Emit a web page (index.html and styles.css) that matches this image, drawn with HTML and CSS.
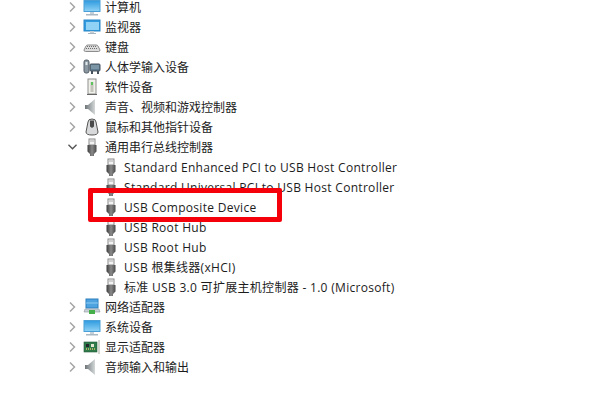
FILE: index.html
```html
<!DOCTYPE html>
<html lang="zh-CN">
<head>
  <meta charset="UTF-8" />
  <title>设备管理器</title>
  <link rel="stylesheet" href="styles.css">
</head>
<body>
  <svg class="defs" width="0" height="0">
    <defs>
      <linearGradient id="screen" x1="0" y1="0" x2="0" y2="1">
        <stop offset="0" stop-color="#2f9be0"/>
        <stop offset="1" stop-color="#8fd2f5"/>
      </linearGradient>
      <linearGradient id="plug" x1="0" y1="0" x2="1" y2="0">
        <stop offset="0" stop-color="#3c3c3c"/>
        <stop offset="0.5" stop-color="#8a8a8a"/>
        <stop offset="1" stop-color="#4a4a4a"/>
      </linearGradient>
      <linearGradient id="cone" x1="0" y1="0" x2="1" y2="0">
        <stop offset="0" stop-color="#6f7679"/>
        <stop offset="1" stop-color="#d4d8d9"/>
      </linearGradient>
      <symbol id="chev-r" viewBox="0 0 8 12"><path d="M1.500 1.500 6 6l-4.500 4.500" fill="none" stroke="#a6a6a6" stroke-width="1.500"/></symbol>
      <symbol id="chev-d" viewBox="1 1 10 6"><path d="M1.500 1.500 6 6l4.500-4.500" fill="none" stroke="#555" stroke-width="1.500"/></symbol>
      <symbol id="i-pc" viewBox="0 -2 18 18"><rect x="1" y="0.500" width="16" height="11" fill="url(#screen)" stroke="#4a9fd6"/><path d="M7 12h4v2H7z" fill="#c5d0d8"/><path d="M3 14h12v1.500H3z" fill="#a9b8c2"/></symbol>
      <symbol id="i-mon" viewBox="0 -1 18 18"><rect x="1" y="1" width="16" height="11" fill="#2f9be0" stroke="#2a86c6"/><rect x="3" y="3" width="13" height="8" fill="#8fd2f5"/><path d="M7 12h4v2H7z" fill="#c5d0d8"/><path d="M5 14h8v1H5z" fill="#a7b4bd"/></symbol>
      <symbol id="i-kbd" viewBox="0 0 18 18"><path d="M1 12l2-4q.500-1 2-1h8q1.500 0 2 1l2 4q0 1.500-1.500 1.500h-13Q1 13.500 1 12z" fill="#dcdcdc" stroke="#8c8c8c"/><path d="M4 8.500h10M3 10.500h12" stroke="#6f6f6f" stroke-dasharray="1 1"/></symbol>
      <symbol id="i-hid" viewBox="0 0 18 18"><rect x="1" y="2" width="5" height="13" rx="2" fill="#8b98a1" stroke="#55606a"/><rect x="2.500" y="4" width="2" height="3" fill="#e4e8ea"/><rect x="7" y="6" width="10" height="7" rx="1" fill="#5f7d8f" stroke="#46535c"/><path d="M8.500 8h7M8.500 10h7" stroke="#cfe0ea" stroke-dasharray="1 1"/><path d="M9 13v3M15 13v3" stroke="#46535c" stroke-width="2"/></symbol>
      <symbol id="i-soft" viewBox="0 0 18 18"><rect x="5" y="1" width="8" height="15" fill="#f0f0ea" stroke="#8f8f8f"/><rect x="7.500" y="4" width="3" height="10" fill="#c4c4bc"/><rect x="8" y="4" width="2" height="3" fill="#5cc45c"/><path d="M4 16.500h10" stroke="#666"/></symbol>
      <symbol id="i-spk" viewBox="0 0 18 18"><path d="M2 7h3l7-6v16l-7-6H2z" fill="url(#cone)"/></symbol>
      <symbol id="i-mouse" viewBox="0 0 18 18"><path d="M5 4q0-3 4-3t4 3l2 10q0 3-6 3t-6-3z" fill="#d7d9da" stroke="#555"/><path d="M7 2.500h4v6l-2 1.500-2-1.500z" fill="#4a4a4a"/></symbol>
      <symbol id="i-usb" viewBox="0 0 16 18"><rect x="5" y="1" width="6" height="6" fill="#f4f4f4" stroke="#8a8a8a"/><path d="M6.500 3h1M8.500 3h1" stroke="#666"/><path d="M3.500 7h9v6.500l-2.500 2.500v2H6v-2l-2.500-2.500z" fill="url(#plug)"/></symbol>
      <symbol id="i-net" viewBox="0 0 18 18"><rect x="3" y="1" width="12" height="9" fill="#4da3e0" stroke="#2b7fbd"/><path d="M3 5h12" stroke="#8fcbf2"/><path d="M2 11h14l1 3H1z" fill="#c9d2d8" stroke="#8d989f" stroke-width=".6"/><rect x="6" y="12" width="6" height="4" fill="#45b04a"/></symbol>
      <symbol id="i-gpu" viewBox="0 0 18 18"><rect x="1" y="4" width="13" height="10" fill="#2f7a4a" stroke="#1f5a36" stroke-width=".6"/><rect x="3" y="6" width="3" height="3" fill="#22262a"/><rect x="8" y="6" width="3" height="3" fill="#e4e4d0"/><path d="M3 11h9" stroke="#d9c36a" stroke-width="1.500" stroke-dasharray="1 1"/><path d="M16 2v14" stroke="#c7c7c0" stroke-width="1.500"/></symbol>
    </defs>
  </svg>

  <ul class="tree">
    <li class="row"><svg class="chev"><use href="#chev-r"/></svg><svg class="icon"><use href="#i-pc"/></svg><span>计算机</span></li>
    <li class="row"><svg class="chev"><use href="#chev-r"/></svg><svg class="icon"><use href="#i-mon"/></svg><span>监视器</span></li>
    <li class="row"><svg class="chev"><use href="#chev-r"/></svg><svg class="icon"><use href="#i-kbd"/></svg><span>键盘</span></li>
    <li class="row"><svg class="chev"><use href="#chev-r"/></svg><svg class="icon"><use href="#i-hid"/></svg><span>人体学输入设备</span></li>
    <li class="row"><svg class="chev"><use href="#chev-r"/></svg><svg class="icon"><use href="#i-soft"/></svg><span>软件设备</span></li>
    <li class="row"><svg class="chev"><use href="#chev-r"/></svg><svg class="icon"><use href="#i-spk"/></svg><span>声音、视频和游戏控制器</span></li>
    <li class="row"><svg class="chev"><use href="#chev-r"/></svg><svg class="icon"><use href="#i-mouse"/></svg><span>鼠标和其他指针设备</span></li>
    <li class="row"><svg class="chev"><use href="#chev-d"/></svg><svg class="icon"><use href="#i-usb"/></svg><span>通用串行总线控制器</span></li>
    <li class="row child"><svg class="icon"><use href="#i-usb"/></svg><span>Standard Enhanced PCI to USB Host Controller</span></li>
    <li class="row child"><svg class="icon"><use href="#i-usb"/></svg><span>Standard Universal PCI to USB Host Controller</span></li>
    <li class="row child"><svg class="icon"><use href="#i-usb"/></svg><span>USB Composite Device</span></li>
    <li class="row child"><svg class="icon"><use href="#i-usb"/></svg><span>USB Root Hub</span></li>
    <li class="row child"><svg class="icon"><use href="#i-usb"/></svg><span>USB Root Hub</span></li>
    <li class="row child"><svg class="icon"><use href="#i-usb"/></svg><span>USB 根集线器(xHCI)</span></li>
    <li class="row child"><svg class="icon"><use href="#i-usb"/></svg><span>标准 USB 3.0 可扩展主机控制器 - 1.0 (Microsoft)</span></li>
    <li class="row"><svg class="chev"><use href="#chev-r"/></svg><svg class="icon"><use href="#i-net"/></svg><span>网络适配器</span></li>
    <li class="row"><svg class="chev"><use href="#chev-r"/></svg><svg class="icon"><use href="#i-pc"/></svg><span>系统设备</span></li>
    <li class="row"><svg class="chev"><use href="#chev-r"/></svg><svg class="icon"><use href="#i-gpu"/></svg><span>显示适配器</span></li>
    <li class="row"><svg class="chev"><use href="#chev-r"/></svg><svg class="icon"><use href="#i-spk"/></svg><span>音频输入和输出</span></li>
  </ul>

  <div class="highlight"></div>
</body>
</html>
```

FILE: styles.css
```css
html, body {
  margin: 0;
  padding: 0;
  height: 400px;
  overflow: hidden;
  background-color: #fff;
}

body {
  position: relative;
  font-family: "Open Sans", "Noto Sans CJK SC", sans-serif;
  font-size: 12px;
  color: #1c1c1c;
}

.defs {
  display: block;
  height: 0;
}

.tree {
  list-style: none;
  margin: -3px 0 0;
  padding: 0 0 0 68px;
}

.row {
  display: flex;
  align-items: center;
  height: 20px;
  white-space: nowrap;
}

.chev {
  width: 9px;
  height: 12px;
  margin-right: 6px;
}

.icon {
  width: 18px;
  height: 18px;
  margin-right: 4px;
}

.child {
  padding-left: 35px;
  letter-spacing: 0.3px;
}

.child .icon {
  width: 16px;
  height: 18px;
  margin-right: 5px;
}

.highlight {
  position: absolute;
  left: 88px;
  top: 188px;
  width: 184px;
  height: 24px;
  border: 5px solid #f5000a;
  border-radius: 2px;
}
```
